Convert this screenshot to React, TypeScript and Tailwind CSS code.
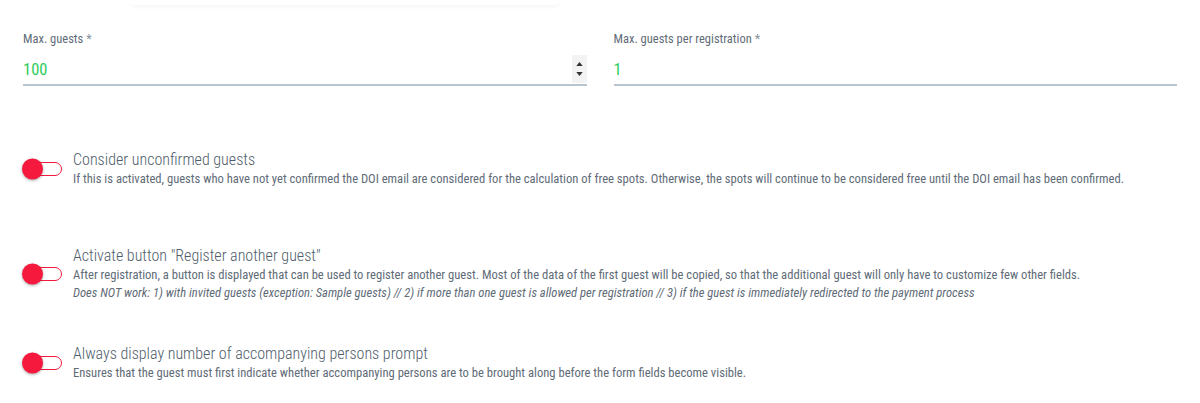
import { useState } from "react";

const font = { fontFamily: "Roboto, 'Liberation Sans', sans-serif", fontStretch: "condensed" } as const;

type ToggleRowProps = {
  title: string;
  text: string;
  note?: string;
  className?: string;
};

function Toggle() {
  const [on, setOn] = useState(false);
  return (
    <button
      onClick={() => setOn(!on)}
      className="relative h-[14px] w-[39px] shrink-0 rounded-full border-[1.5px] border-[#f5193d] bg-white"
    >
      <span
        className={`absolute top-1/2 -translate-y-1/2 h-[21px] w-[21px] rounded-full bg-[#f5193d] shadow-[0_1px_3px_rgba(0,0,0,0.35)] ${on ? "left-[18px]" : "left-[-2px]"}`}
      />
    </button>
  );
}

function ToggleRow({ title, text, note, className }: ToggleRowProps) {
  return (
    <div className={`flex items-center gap-[10px] ${className ?? ""}`}>
      <Toggle />
      <div className="pl-[1px]">
        <div className="text-[16px] font-[350] leading-[20px] text-[#4f5d6a]">{title}</div>
        <div className="text-[12.6px] leading-[18px] text-[#5f6c78]">{text}</div>
        {note && (
          <div className="text-[12.6px] italic leading-[18px] text-[#5f6c78]">{note}</div>
        )}
      </div>
    </div>
  );
}

function NumberField({ label, value, spinner }: { label: string; value: string; spinner?: boolean }) {
  return (
    <div className="flex-1">
      <div className="text-[12.5px] leading-[16px] text-[#5f6c78]">
        {label} <span className="text-[#8a949e]">*</span>
      </div>
      <div className="mt-[9px] flex h-[30px] items-center justify-between border-b-2 border-[#b9c4ce]">
        <span className="text-[16.5px] text-[#2ecc5a]">{value}</span>
        {spinner && (
          <div className="mb-[2px] flex h-[28px] w-[15px] flex-col items-center justify-center gap-[6px] bg-[#f3f3f3]">
            <svg width="7" height="4" viewBox="0 0 8 5"><path d="M4 0L8 5H0z" fill="#333" /></svg>
            <svg width="7" height="4" viewBox="0 0 8 5"><path d="M0 0H8L4 5z" fill="#333" /></svg>
          </div>
        )}
      </div>
    </div>
  );
}

export default function App() {
  return (
    <div className="h-[403px] w-[1200px] overflow-hidden bg-white" style={font}>
      {/* card edge above */}
      <div className="mx-auto h-[5px] w-[430px] -translate-x-[255px] rounded-b-[40px] shadow-[0_2px_4px_rgba(0,0,0,0.04)]" />

      <div className="px-[23px] pt-[26px]">
        <div className="flex gap-[27px]">
          <NumberField label="Max. guests" value="100" spinner />
          <NumberField label="Max. guests per registration" value="1" />
        </div>

        <ToggleRow
          className="mt-[64px]"
          title="Consider unconfirmed guests"
          text="If this is activated, guests who have not yet confirmed the DOI email are considered for the calculation of free spots. Otherwise, the spots will continue to be considered free until the DOI email has been confirmed."
        />
        <ToggleRow
          className="mt-[58px]"
          title={'Activate button "Register another guest"'}
          text="After registration, a button is displayed that can be used to register another guest. Most of the data of the first guest will be copied, so that the additional guest will only have to customize few other fields."
          note="Does NOT work: 1) with invited guests (exception: Sample guests) // 2) if more than one guest is allowed per registration // 3) if the guest is immediately redirected to the payment process"
        />
        <ToggleRow
          className="mt-[42px]"
          title="Always display number of accompanying persons prompt"
          text="Ensures that the guest must first indicate whether accompanying persons are to be brought along before the form fields become visible."
        />
      </div>
    </div>
  );
}
